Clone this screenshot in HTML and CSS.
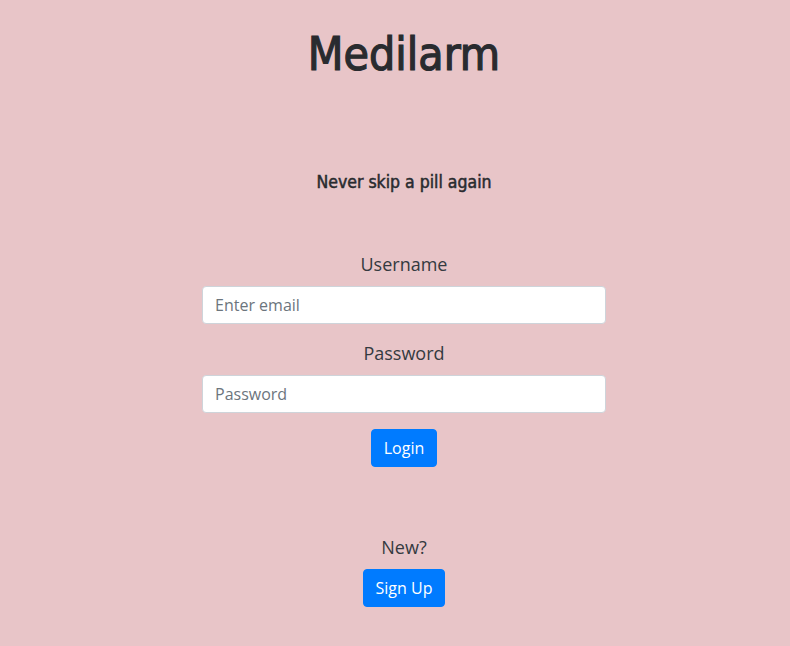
FILE: index.html
```html
<!DOCTYPE html>
<html>
<head>
<meta charset="utf-8">
<link rel="stylesheet" href="styles.css">
</head>
<body>
<main class="page">
  <h1 class="title">Medilarm</h1>
  <p class="tagline">Never skip a pill again</p>
  <form class="login">
    <label class="label" for="user">Username</label>
    <input class="field" id="user" type="email" placeholder="Enter email">
    <label class="label label-pw" for="pw">Password</label>
    <input class="field" id="pw" type="password" placeholder="Password">
    <button class="btn btn-login" type="button">Login</button>
  </form>
  <div class="signup">
    <p class="new">New?</p>
    <button class="btn" type="button">Sign Up</button>
  </div>
</main>
</body>
</html>
```

FILE: styles.css
```css
html, body {
  margin: 0;
  padding: 0;
}
body {
  background: #e8c5c8;
  color: #212529;
  font-family: "Open Sans", "Noto Sans", sans-serif;
  font-size: 16px;
}
.page {
  width: 404px;
  margin: 0 0 0 calc(50% - 193px);
  display: flex;
  flex-direction: column;
  align-items: center;
  text-align: center;
}
.title {
  margin: 24px 0 0;
  font-family: "DejaVu Sans Condensed", "DejaVu Sans", sans-serif;
  font-weight: 400;
  font-size: 46px;
  line-height: 60px;
  color: #292b2f;
  -webkit-text-stroke: 1.2px #292b2f;
}
.tagline {
  margin: 86px 0 0;
  font-family: "DejaVu Sans Condensed", "DejaVu Sans", sans-serif;
  font-weight: 400;
  font-size: 17.5px;
  line-height: 24px;
  color: #292b2f;
  -webkit-text-stroke: 0.5px #292b2f;
}
.login {
  width: 100%;
  display: flex;
  flex-direction: column;
  align-items: center;
  margin-top: 58px;
}
.label {
  display: block;
  font-size: 18px;
  line-height: 24px;
  color: #343a40;
}
.label-pw {
  margin-top: 17px;
}
.field {
  box-sizing: border-box;
  width: 100%;
  height: 38px;
  margin-top: 10px;
  padding: 6px 12px;
  border: 1px solid #ced4da;
  border-radius: 4px;
  background: #fff;
  font-family: "Open Sans", "Noto Sans", sans-serif;
  font-size: 16px;
  color: #495057;
}
.field::placeholder {
  color: #6c757d;
}
.btn {
  box-sizing: border-box;
  height: 38px;
  padding: 6px 12px;
  border: 1px solid #007bff;
  border-radius: 4px;
  background: #007bff;
  color: #fff;
  font-family: "Open Sans", "Noto Sans", sans-serif;
  font-size: 16px;
  line-height: 24px;
}
.btn-login {
  margin-top: 16px;
}
.signup {
  display: flex;
  flex-direction: column;
  align-items: center;
  margin-top: 68px;
}
.new {
  margin: 0 0 10px;
  font-size: 18px;
  line-height: 24px;
  color: #343a40;
}
```
